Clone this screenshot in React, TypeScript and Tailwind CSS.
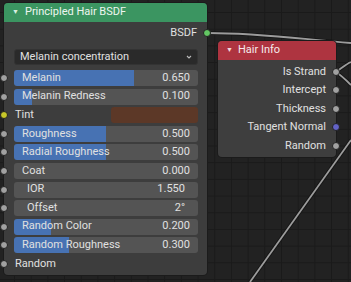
type InputRow = {
  label: string;
  kind: "slider" | "number" | "color" | "label";
  value?: string;
  fill?: number;
  socket: string;
};

const inputs: InputRow[] = [
  { label: "Melanin", kind: "slider", value: "0.650", fill: 0.65, socket: "#a1a1a1" },
  { label: "Melanin Redness", kind: "slider", value: "0.100", fill: 0.1, socket: "#a1a1a1" },
  { label: "Tint", kind: "color", socket: "#c7c729" },
  { label: "Roughness", kind: "slider", value: "0.500", fill: 0.5, socket: "#a1a1a1" },
  { label: "Radial Roughness", kind: "slider", value: "0.500", fill: 0.5, socket: "#a1a1a1" },
  { label: "Coat", kind: "slider", value: "0.000", fill: 0, socket: "#a1a1a1" },
  { label: "IOR", kind: "number", value: "1.550", socket: "#a1a1a1" },
  { label: "Offset", kind: "number", value: "2°", socket: "#a1a1a1" },
  { label: "Random Color", kind: "slider", value: "0.200", fill: 0.2, socket: "#a1a1a1" },
  { label: "Random Roughness", kind: "slider", value: "0.300", fill: 0.3, socket: "#a1a1a1" },
  { label: "Random", kind: "label", socket: "#a1a1a1" },
];

const outputs = [
  { label: "Is Strand", socket: "#a1a1a1" },
  { label: "Intercept", socket: "#a1a1a1" },
  { label: "Thickness", socket: "#a1a1a1" },
  { label: "Tangent Normal", socket: "#6363c7" },
  { label: "Random", socket: "#a1a1a1" },
];

function Socket({ color, side }: { color: string; side: "left" | "right" }) {
  return (
    <span
      className={`absolute top-1/2 h-[8px] w-[8px] -translate-y-1/2 rounded-full border border-[#222] ${
        side === "left" ? "-left-[14px]" : "-right-[14px]"
      }`}
      style={{ backgroundColor: color }}
    />
  );
}

function Field({ row }: { row: InputRow }) {
  if (row.kind === "label") {
    return <div className="pl-px">{row.label}</div>;
  }
  if (row.kind === "color") {
    return (
      <div className="flex items-center justify-between">
        <span className="pl-px">{row.label}</span>
        <div className="h-4 w-[87px] rounded-[3px] bg-[#5c3827]" />
      </div>
    );
  }
  const pct = (row.fill ?? 0) * 100;
  return (
    <div
      className={`flex h-4 items-center justify-between rounded-[3px] bg-[#545454] ${
        row.kind === "number" ? "pl-[13px] pr-[13px]" : "pl-2 pr-2"
      }`}
      style={{
        background:
          row.kind === "slider" && pct > 0
            ? `linear-gradient(to right, #4772b3 ${pct}%, #545454 ${pct}%)`
            : undefined,
      }}
    >
      <span>{row.label}</span>
      <span>{row.value}</span>
    </div>
  );
}

export default function App() {
  return (
    <div className="relative h-[282px] w-[351px] overflow-hidden bg-[#222222] bg-[linear-gradient(to_right,#1a1a1a_1px,transparent_1px),linear-gradient(to_bottom,#1a1a1a_1px,transparent_1px)] bg-[size:16.7px_16.7px] bg-[position:14px_12px] font-['Roboto',Arial,sans-serif] text-[11px] text-[#e0e0e0]">
      {/* links */}
      <svg className="absolute inset-0" width="351" height="282" fill="none">
        <g stroke="#141414" strokeWidth="3.5">
          <path d="M207 33 C 260 33, 300 39, 351 43" />
          <path d="M336 72 C 342 68, 346 64, 351 62" />
          <path d="M336 72 C 342 76, 346 80, 351 85" />
          <path d="M250 282 L 351 140" />
        </g>
        <g stroke="#9c9c9c" strokeWidth="1.8">
          <path d="M207 33 C 260 33, 300 39, 351 43" />
          <path d="M336 72 C 342 68, 346 64, 351 62" />
          <path d="M336 72 C 342 76, 346 80, 351 85" />
          <path d="M250 282 L 351 140" />
        </g>
      </svg>

      {/* Principled Hair BSDF */}
      <div className="absolute left-[4px] top-[3px] flex h-[272px] w-[203px] flex-col rounded-[4px] bg-[#3d3d3d] shadow-[0_0_0_1px_#1b1b1b]">
        <div className="flex h-[19px] items-center gap-[6px] rounded-t-[4px] bg-[#3b9561] pl-[8px]">
          <span className="text-[7px] text-[#d8efe0]">▼</span>
          <span className="text-[#eef5f0]">Principled Hair BSDF</span>
        </div>
        <div className="flex flex-1 flex-col pl-[10px] pr-[9px] pt-[2px]">
          <div className="relative flex h-[18px] items-center justify-end pr-px">
            BSDF
            <span className="absolute -right-[13px] top-1/2 h-[8px] w-[8px] -translate-y-1/2 rounded-full border border-[#222] bg-[#63c763]" />
          </div>
          <div className="mt-[7px] flex h-4 items-center justify-between rounded-[3px] border border-[#333] bg-[#2a2a2a] pl-[5px] pr-[4px]">
            <span>Melanin concentration</span>
            <svg width="8" height="8" viewBox="0 0 8 8" fill="none" stroke="#bbb" strokeWidth="1.1">
              <path d="M2 3 L4 5 L6 3" />
            </svg>
          </div>
          <div className="mt-[3.7px] flex flex-col">
            {inputs.map((row) => (
              <div key={row.label} className="relative flex h-[18.6px] flex-col justify-center">
                <Socket color={row.socket} side="left" />
                <Field row={row} />
              </div>
            ))}
          </div>
        </div>
      </div>

      {/* Hair Info */}
      <div className="absolute left-[218px] top-[41px] flex h-[116px] w-[118px] flex-col rounded-[4px] bg-[#3e3e3e] shadow-[0_0_0_1px_#1b1b1b]">
        <div className="flex h-[19px] items-center gap-[5px] rounded-t-[4px] bg-[#ae3440] pl-[8px]">
          <span className="text-[7px] text-[#f3dadd]">▼</span>
          <span className="text-[#f5eaeb]">Hair Info</span>
        </div>
        <div className="flex flex-col pr-[10px] pt-[2.7px]">
          {outputs.map((o) => (
            <div key={o.label} className="relative flex h-[18.5px] items-center justify-end">
              {o.label}
              <span
                className="absolute -right-[14px] top-1/2 h-[8px] w-[8px] -translate-y-1/2 rounded-full border border-[#222]"
                style={{ backgroundColor: o.socket }}
              />
            </div>
          ))}
        </div>
      </div>
    </div>
  );
}
